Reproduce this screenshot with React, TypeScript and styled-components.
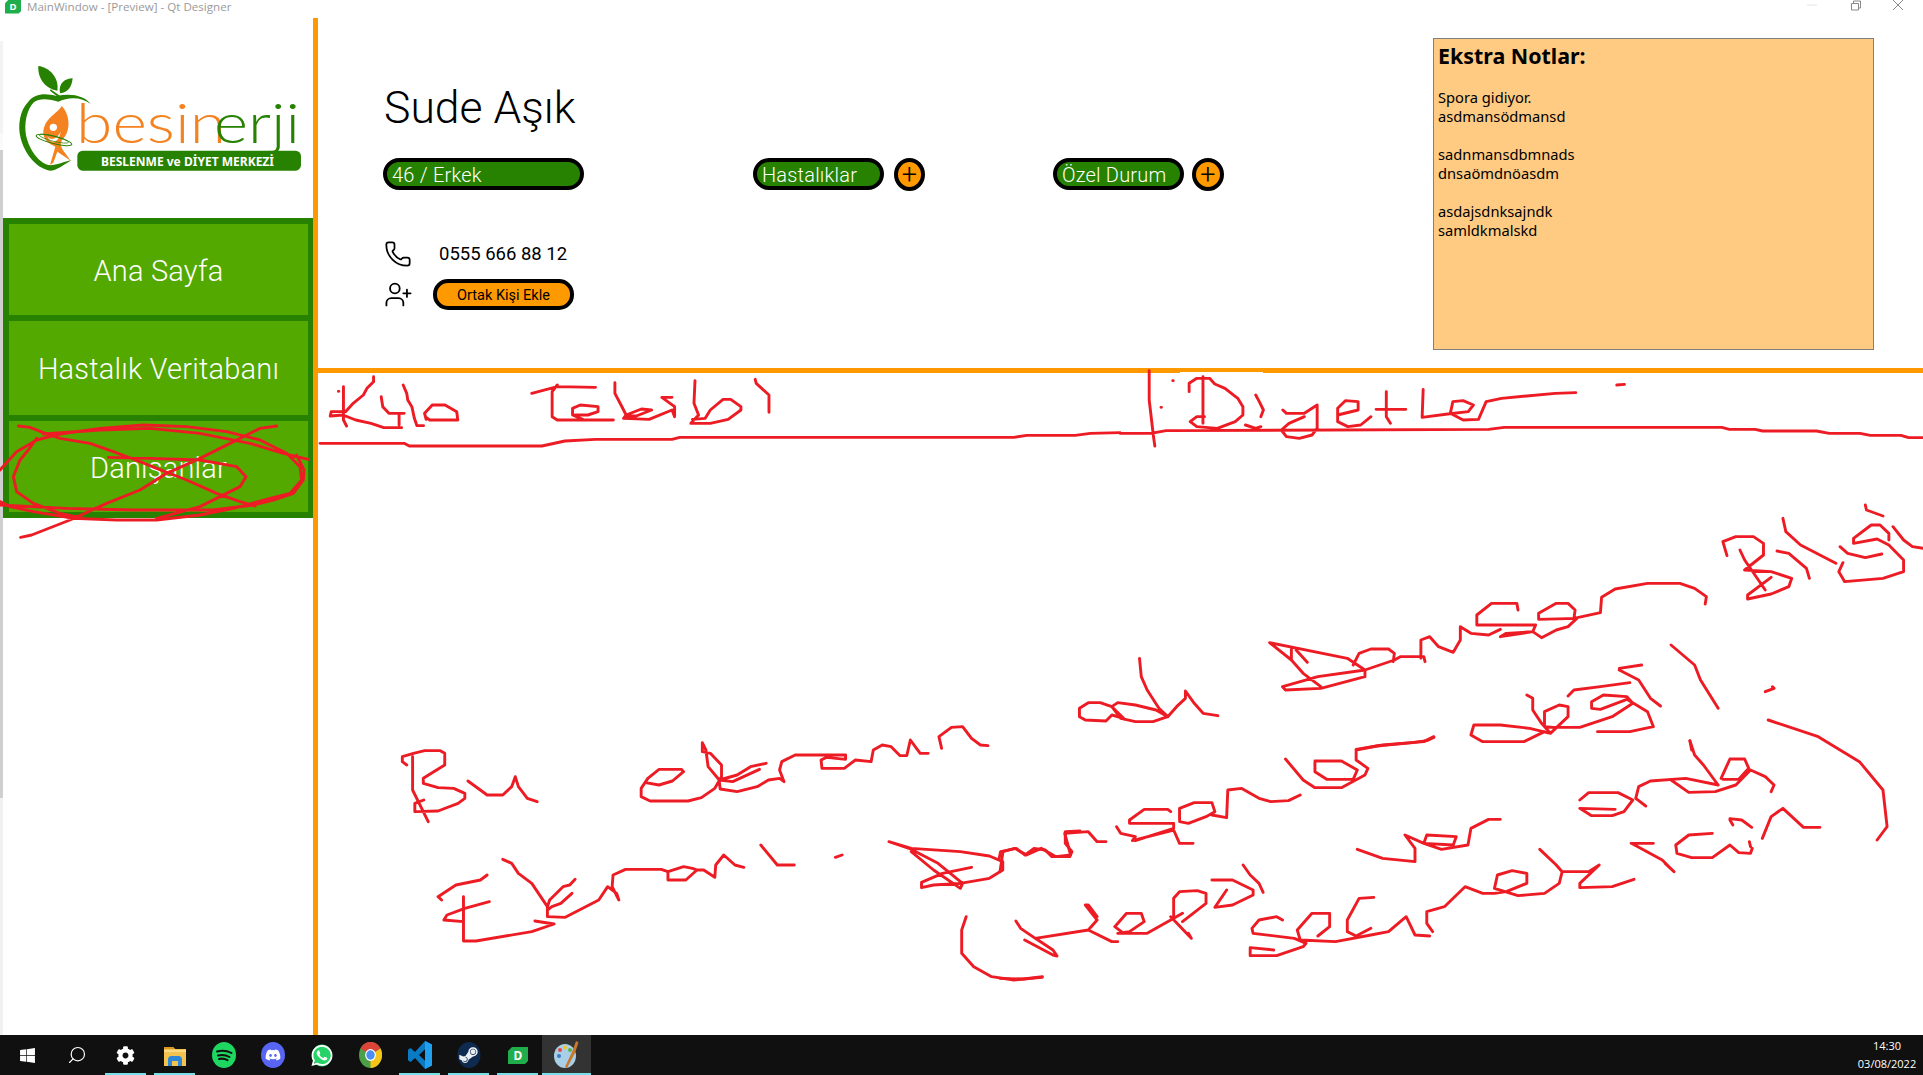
import React from 'react';
import styled, { createGlobalStyle } from 'styled-components';
import { Phone, UserPlus, Search } from 'lucide-react';
import { FaWindows, FaCog, FaDiscord, FaWhatsapp, FaSteamSymbol } from 'react-icons/fa';

const Global = createGlobalStyle`
  html, body { margin: 0; padding: 0; background: #fff; overflow: hidden; }
  * { box-sizing: border-box; }
`;

const Page = styled.div`
  position: relative;
  width: 1923px;
  height: 1075px;
  display: flex;
  flex-direction: column;
  overflow: hidden;
  background: #fff;
  font-family: 'Roboto', 'Noto Sans', sans-serif;
`;

const TitleBar = styled.header`
  height: 18px;
  flex: none;
  display: flex;
  align-items: flex-start;
  padding-left: 5px;
  gap: 6px;
`;
const TitleText = styled.span`
  font: 11.6px/14px 'Open Sans', sans-serif;
  color: #9a9a9a;
  white-space: nowrap;
`;
const WindowControls = styled.div`
  margin-left: auto;
  display: flex;
  gap: 29px;
  padding-right: 18px;
  color: #777;
`;
const ControlGlyph = styled.svg`
  width: 14px;
  height: 11px;
  display: block;
`;

const Main = styled.div`
  flex: 1;
  min-height: 0;
  display: flex;
`;

const Sidebar = styled.aside`
  width: 318px;
  flex: none;
  border-right: 5px solid #ff9900;
  padding-left: 3px;
  background:
    linear-gradient(to bottom, #fff 23px, #f3f3f6 23px, #f3f3f6 115px, #fafafa 115px, #fafafa 132px, #cfcfcf 132px, #cfcfcf 780px, #f1f1f1 780px)
    0 0 / 3px 100% no-repeat;
`;
const LogoBox = styled.div`
  height: 200px;
  margin-left: -3px;
`;
const Nav = styled.nav`
  width: 310px;
  height: 300px;
  display: grid;
  grid-template-rows: 91px 94px 91px;
  gap: 6px;
  padding: 6px 5px 6px 6px;
  background: #268200;
`;
const NavItem = styled.div`
  background: #53a900;
  color: #fff;
  display: flex;
  align-items: center;
  justify-content: center;
  padding-top: 2px;
  font-size: 29px;
  font-weight: 300;
  letter-spacing: 0.2px;
`;

const Content = styled.main`
  flex: 1;
  min-width: 0;
  display: flex;
  flex-direction: column;
`;
const Header = styled.section`
  height: 355px;
  flex: none;
  display: flex;
  border-bottom: 5px solid #ff9900;
`;
const Info = styled.div`
  flex: 1;
  padding: 60px 0 0 65px;
`;
const Name = styled.h1`
  margin: 0 0 20px 1px;
  font-size: 44.5px;
  line-height: 60px;
  font-weight: 300;
  color: #000;
`;
const PillRow = styled.div`
  display: flex;
  align-items: center;
  height: 32px;
`;
const Pill = styled.div<{ $w: number; $gapAfter: number }>`
  width: ${p => p.$w}px;
  height: 32px;
  margin-right: ${p => p.$gapAfter}px;
  padding: 1px 0 0 5px;
  border: 4px solid #000;
  border-radius: 16px;
  background: #268200;
  color: #fff;
  font-size: 20px;
  font-weight: 300;
  line-height: 24px;
  letter-spacing: 0.2px;
`;
const PlusButton = styled.div<{ $w: number; $gapAfter: number }>`
  width: ${p => p.$w}px;
  height: 33px;
  margin-right: ${p => p.$gapAfter}px;
  border: 4px solid #000;
  border-radius: 50%;
  background: #ff9900;
  display: flex;
  align-items: center;
  justify-content: center;
  color: #000;
  font-size: 27px;
  font-weight: 300;
  line-height: 1;
  padding-top: 3px;
`;
const ContactRow = styled.div<{ $top: number }>`
  display: flex;
  align-items: center;
  height: 31px;
  margin-top: ${p => p.$top}px;
  padding-left: 1px;
`;
const IconCell = styled.span`
  width: 49px;
  flex: none;
  display: flex;
`;
const PhoneText = styled.span`
  font-size: 18.5px;
  font-weight: 400;
  color: #000;
  padding: 1px 0 0 6px;
`;
const ShareButton = styled.div`
  width: 141px;
  height: 31px;
  border: 4px solid #000;
  border-radius: 15px;
  background: #ff9900;
  color: #000;
  font-size: 14.5px;
  display: flex;
  align-items: center;
  justify-content: center;
  padding-top: 1px;
  font-weight: 400;
`;
const Notes = styled.div`
  width: 441px;
  height: 312px;
  margin: 20px 49px 0 0;
  padding: 4px 4px;
  border: 1.5px solid #808080;
  background: #ffcb83;
  color: #000;
  font: 14.7px/19px 'Noto Sans', sans-serif;
`;
const NotesTitle = styled.div`
  font-size: 21.4px;
  font-weight: 700;
  line-height: 26px;
  margin-bottom: 19px;
`;
const NotesLine = styled.div`
  min-height: 19px;
  white-space: pre;
`;

const Canvas = styled.div`
  flex: 1;
  background: #fff;
`;

const Taskbar = styled.footer`
  height: 40px;
  flex: none;
  display: flex;
  padding-left: 3px;
  background: #101010;
  color: #fff;
`;
const Slot = styled.div<{ $active?: boolean; $running?: boolean }>`
  position: relative;
  width: 49px;
  height: 40px;
  display: flex;
  align-items: center;
  justify-content: center;
  background: ${p => (p.$active ? '#333' : 'transparent')};
  &::after {
    content: '';
    display: ${p => (p.$running ? 'block' : 'none')};
    position: absolute;
    bottom: 0;
    left: ${p => (p.$active ? 0 : 4)}px;
    right: ${p => (p.$active ? 0 : 4)}px;
    height: 2px;
    background: #76dfe8;
  }
`;
const Clock = styled.div`
  margin-left: auto;
  width: 72px;
  padding-top: 2px;
  font: 11px/18px 'Open Sans', sans-serif;
  text-align: center;
  color: #fff;
`;
const Flip = styled.span`
  display: flex;
  transform: scaleX(-1);
`;

const InkLayer = styled.svg`
  position: absolute;
  left: 0;
  top: 0;
  width: 1923px;
  height: 1075px;
  pointer-events: none;
`;
const Ink = styled.path`
  fill: none;
  stroke: #ed1c24;
  stroke-width: 2.9px;
  stroke-linejoin: round;
  stroke-linecap: round;
  vector-effect: non-scaling-stroke;
`;
const Patch = styled.rect`
  fill: #fff;
`;

const LogoStroke = styled.path`
  fill: #268200;
`;
const LogoWord = styled.text<{ $c: string }>`
  font-family: 'Lato', sans-serif;
  font-weight: 300;
  font-size: 56px;
  fill: ${p => p.$c};
`;
const LogoTag = styled.text`
  font-family: 'Noto Sans', sans-serif;
  font-weight: 700;
  font-size: 12px;
  fill: #fff;
`;

const Logo = () => (
  <svg width="313" height="200" viewBox="0 18 313 200">
    <LogoWord $c="#f58220" x="76" y="143" textLength="150" lengthAdjust="spacingAndGlyphs">besin</LogoWord>
    <LogoWord $c="#268200" x="214" y="143" textLength="86" lengthAdjust="spacingAndGlyphs">erji</LogoWord>
    <g transform="translate(0 50) scale(.3333)">
      <LogoStroke d="M115 48C150 52 178 85 172 122C140 118 112 88 115 48Z" />
      <LogoStroke d="M218 85C196 85 174 100 180 130C205 128 216 108 218 85Z" />
      <LogoStroke d="M152 118L184 140L178 144L150 122Z" />
      <LogoStroke d="M272 162C255 138 215 128 170 138C140 130 105 128 85 155C60 180 52 225 62 265C72 305 105 355 150 362C170 362 190 345 215 330C190 335 165 348 145 345C110 335 85 290 78 255C72 220 80 180 100 158C120 142 150 148 175 155C205 140 245 140 272 162Z" />
      <path d="M185 168C172 192 130 205 130 250C132 272 148 282 166 290L150 345L160 338L172 305L212 332C195 305 172 290 188 268C212 245 212 195 185 168Z" fill="#f58220" />
      <circle cx="160" cy="232" r="11" fill="#fff" />
      <path d="M142 258C150 272 170 270 182 245C176 282 150 285 142 258Z" fill="#fff" />
      <ellipse cx="162" cy="270" rx="55" ry="11" transform="rotate(14 162 270)" fill="none" stroke="#268200" strokeWidth="3" />
      <ellipse cx="162" cy="266" rx="45" ry="8" transform="rotate(14 162 266)" fill="none" stroke="#268200" strokeWidth="2" />
      <rect x="232" y="302" width="671" height="60" rx="16" fill="#268200" />
    </g>
    <LogoTag x="101" y="166" textLength="173" lengthAdjust="spacingAndGlyphs">BESLENME ve DİYET MERKEZİ</LogoTag>
  </svg>
);

const DesignerIcon = ({ size }: { size: number }) => (
  <svg width={size} height={size * 0.85} viewBox="0 0 20 17">
    <path d="M4 0H20V14L17 17H0V4Z" fill="#1fae4b" />
    <text x="10" y="13" textAnchor="middle" fontFamily="Noto Sans" fontSize="12" fontWeight="700" fill="#fff">D</text>
  </svg>
);

const FolderIcon = () => (
  <svg width="22" height="21" viewBox="0 0 22 21">
    <path d="M0 2H9L11 4H22V21H0Z" fill="#f4c24f" />
    <path d="M0 2H9L11 4H0Z" fill="#d9971f" />
    <path d="M0 5H22V7H0Z" fill="#fbdc82" />
    <path d="M4 21V14C4 12 6 11 7 11H15C16 11 18 12 18 14V21H14V16H8V21Z" fill="#2f88d6" />
  </svg>
);
const SpotifyIcon = () => (
  <svg width="24" height="26" viewBox="0 0 24 26">
    <ellipse cx="12" cy="13" rx="12" ry="13" fill="#1ed760" />
    <path d="M5 9.5C10 8 15 8.5 19.5 11M6 13.5C10 12.5 14 13 17.5 15M7 17C10 16.2 13 16.8 15.5 18.2" fill="none" stroke="#111" strokeWidth="2" strokeLinecap="round" />
  </svg>
);
const DiscordIcon = () => (
  <svg width="24" height="26" viewBox="0 0 24 26">
    <ellipse cx="12" cy="13" rx="12" ry="13" fill="#5865f2" />
    <FaDiscord x="4" y="5" size="16" color="#fff" />
  </svg>
);
const WhatsappIcon = () => (
  <svg width="24" height="27" viewBox="0 0 24 27">
    <ellipse cx="12" cy="13.5" rx="10" ry="11" fill="#25d366" />
    <FaWhatsapp x="0" y="1.5" size="24" color="#fff" />
  </svg>
);
const ChromeIcon = () => (
  <svg width="23" height="26" viewBox="0 0 24 24" preserveAspectRatio="none">
    <circle cx="12" cy="12" r="12" fill="#4c9f46" />
    <path d="M12 12L1.6 6A12 12 0 0 1 22.4 6Z" fill="#dc4437" />
    <path d="M12 12L22.4 6A12 12 0 0 1 12 24Z" fill="#f5c518" />
    <circle cx="12" cy="12" r="5.6" fill="#fff" />
    <circle cx="12" cy="12" r="4.4" fill="#4a8ef5" />
  </svg>
);
const VscodeIcon = () => (
  <svg width="24" height="28" viewBox="0 0 24 24" preserveAspectRatio="none">
    <path d="M17 0L24 3V21L17 24L7 14.5L2.5 18L0 16.5V7.5L2.5 6L7 9.5ZM17 7L11 12L17 17Z" fill="#0a7ac4" />
    <path d="M17 0L24 3V21L17 24Z" fill="#21a0ef" />
  </svg>
);
const SteamIcon = () => (
  <svg width="24" height="26" viewBox="0 0 24 26">
    <ellipse cx="12" cy="13" rx="11.5" ry="13" fill="#0e2a4e" />
    <FaSteamSymbol x="1" y="2.5" size="21" color="#e8eef4" />
  </svg>
);
const PaintIcon = () => (
  <svg width="26" height="30" viewBox="0 0 26 30">
    <ellipse cx="11" cy="16" rx="11" ry="12" fill="#a9cfe6" />
    <circle cx="6" cy="10" r="2" fill="#e04848" />
    <circle cx="11" cy="7.5" r="2" fill="#f2c230" />
    <circle cx="16" cy="10" r="2" fill="#58b248" />
    <circle cx="5" cy="16" r="2" fill="#3a78c8" />
    <path d="M22 1L24.5 2.5L21 13L13 28L11 27L18 12Z" fill="#c9772a" />
  </svg>
);

const taskItems: { key: string; icon: React.ReactNode; running?: boolean; active?: boolean }[] = [
  { key: 'start', icon: <FaWindows size={17} /> },
  { key: 'search', icon: <Flip><Search size={20} strokeWidth={1.4} /></Flip> },
  { key: 'settings', icon: <FaCog size={19} />, running: true },
  { key: 'files', icon: <FolderIcon />, running: true },
  { key: 'spotify', icon: <SpotifyIcon /> },
  { key: 'discord', icon: <DiscordIcon /> },
  { key: 'whatsapp', icon: <WhatsappIcon /> },
  { key: 'chrome', icon: <ChromeIcon /> },
  { key: 'vscode', icon: <VscodeIcon />, running: true },
  { key: 'steam', icon: <SteamIcon />, running: true },
  { key: 'designer', icon: <DesignerIcon size={20} />, running: true },
  { key: 'paint', icon: <PaintIcon />, running: true, active: true },
];

const notes = ['Spora gidiyor.', 'asdmansödmansd', '', 'sadnmansdbmnads', 'dnsaömdnöasdm', '', 'asdajsdnksajndk', 'samldkmalskd'];

const strokes: { x: number; y: number; sx: number; d: string }[] = [
  { x: 0, y: 210, sx: 3, d: `
    M55,648 L90,652 L130,668 L180,685 L270,700 L340,725 L420,755 L470,775 L560,810 L650,850 L720,875 L765,888
    M0,780 L50,725 L110,690 L180,672 L300,655 L430,645 L560,650 L680,665 L780,690 L860,730 L900,770 L905,810 L870,850 L810,865 L700,895 L600,915 L470,930 L350,930 L220,925 L100,905 L30,890 L0,875
    M110,685 L85,720 L60,750 L40,800 L50,845 L100,880 L180,910 L250,925
    M130,672 L300,660 L450,655 L600,670 L750,700 L850,730 L925,748
    M890,735 L912,780 L910,810 L880,850 L820,870 L760,885 L640,900 L400,900 L200,895 L0,885
    M62,982 L95,975 L210,930 L320,880 L420,840 L500,790 L600,745 L690,700 L780,655 L830,648
    M325,742 L450,745 L600,750 L710,770 L738,800 L720,830 L660,860 L600,890 L470,925` },
  { x: 320, y: 360, sx: 1.96, d: `
    M46,80 L46,180 L52,198 M105,50 L105,65 L92,85 L85,105 L65,130 L50,155 L22,155 L20,168 L45,165 L70,180 L100,190 L125,203 L160,203 M36,94 L37,94
    M120,110 L123,140 L135,160 L165,160 M155,160 L155,195 M163,75 L170,100 L172,120 L180,140 L185,175 L190,197 L203,197
    M208,178 L205,160 L220,135 L245,135 L268,155 L270,180 L215,180 L208,172
    M415,100 L465,80 L540,82 M465,75 L455,95 L455,170 L465,180 L575,180 M515,178 L495,165 L495,145 L510,135 L545,140 L545,155 L525,165 L500,165
    M578,68 L578,100 L590,135 L600,165 L595,175 L645,178 L690,150 L695,170 L695,140 L670,112 L690,112 M600,165 L630,147 L650,150 L620,168 L600,168
    M735,62 L733,130 L742,165 L727,190 L765,190 L800,178 L825,150 L825,140 L805,118 L790,118 L765,150 L755,175 L730,178
    M853,58 L855,70 L880,105 L880,157
    M0,250 L165,250 L175,258 L435,258 L480,243 L540,238 L690,238 L705,232 L1360,232 L1385,226 L1480,226 L1510,220 L1568,218` },
  { x: 1120, y: 360, sx: 1.9527, d: `
    M0,220 L60,220 L90,212 L720,208 L750,202 L1175,202 L1190,208 L1240,208 L1255,213 L1360,213 L1385,220 L1445,220 L1465,226 L1525,226 L1540,233 L1568,233
    M57,32 L57,120 L65,225 L68,258
    M162,50 L162,190 M135,95 L135,70 L150,55 L175,55 L185,72 L205,85 L230,115 L240,140 L240,165 L225,185 L190,205 L150,200 L137,185 L150,170 L165,170
    M265,105 L272,125 L280,150 L275,170 M245,195 L265,205 L275,200
    M318,150 L325,160 L360,160 L385,135 L385,205 L375,225 L350,235 L325,230 L315,210 L330,190 L360,170
    M425,165 L465,150 L465,125 L440,122 L425,145 L425,185 L445,200 L470,195 L490,170
    M520,95 L520,170 L528,190 M500,148 L558,148
    M592,88 L590,172 L640,162 L680,155 L690,135 L670,122 L650,125 L645,160 L670,180 L700,178 L715,125 L745,115 L850,100 L890,98
    M970,75 L985,73 M103,62 L104,62 M80,142 L81,142` },
  { x: 1000, y: 490, sx: 1.6988, d: `
    M135,655 L150,638 L170,638 L190,650 L200,638 L230,645 L265,660 L285,680 L260,695 L230,695 L205,685 L190,650 L210,685 L190,675 L180,693 L145,690 L135,680 L135,655
    M237,505 L240,560 L250,600 L270,655 L285,680 L300,650 L315,625 L315,603 L330,640 L345,670 L370,677
    M458,458 L590,505 L620,540 L620,560 L545,595 L485,600 L480,590 L540,560 L620,540 L670,510 L680,500 L720,500 L722,515 M458,458 L495,510 L515,550 L545,590 M495,472 L495,510 M503,480 L522,517 M600,525 L610,490 L630,477 L660,477 L670,490 L668,515
    M715,505 L715,450 L730,440 L745,470 L770,487 L782,450 L782,410 L800,430 L830,435 L850,418
    M880,360 L878,340 L835,340 L810,375 L810,405 L910,405 L905,425 L850,440 L860,430 L905,425 L920,443 L945,420 L965,410 L980,385 L915,388 L915,370 L945,340 L965,340 L977,360 L975,385 L1020,368 L1022,322 L1045,297 L1100,280 L1155,280 L1180,295 L1200,320 L1198,342
    M1235,197 L1228,155 L1250,140 L1280,140 L1297,160 L1297,195 L1265,240 L1310,245 L1345,265 L1340,290 L1310,312 L1270,327 L1270,315 L1310,262 M1257,180 L1265,210 L1300,300
    M1320,183 L1340,190 L1370,235 L1375,265
    M1330,85 L1335,125 L1360,165 L1420,220
    M1500,78 L1472,60 L1470,45 M1450,160 L1450,145 L1480,105 L1495,105 L1510,130 L1510,150 M1450,160 L1490,147 L1510,165 L1535,210 L1535,245 L1500,265 L1435,275 L1425,245 L1432,218 M1427,170 L1440,190 L1470,203 L1498,192 M1517,110 L1535,150 L1550,170 L1568,175
    M605,778 L650,765 L720,755 L737,740
    M895,615 L905,625 L905,660 L920,700 L935,730 L965,680 L965,650 L950,645 L925,665 L925,710 L940,712 L985,712 L1040,680 L1075,640 L1065,620 L1025,615 L1005,635 L1005,655 L1020,658 L1065,628 L1100,665 L1110,710 L1070,725 L1015,725
    M935,730 L900,715 L850,705 L805,705 L800,735 L820,755 L890,755 L925,725
    M965,618 L975,600 L1020,590 L1070,578 M1052,535 L1090,525 M1052,540 L1085,570 L1105,625 L1122,648
    M1140,465 L1180,525 L1190,570 L1220,655 M1300,605 L1315,595 L1312,590 M1172,753 L1175,780` },
  { x: 1000, y: 720, sx: 1.6988, d: `
    M1305,0 L1390,50 L1460,125 L1500,210 L1507,320 L1490,360
    M0,455 L5,395 L25,385 L45,405 L70,385 L95,410 L120,405 L110,340 L150,335 L165,365 L180,365
    M198,320 L205,340 L230,350 L225,362 L295,330 L305,370 L328,370 M290,275 L285,268 L245,268 L220,300 L220,310 L295,310 L295,325 L230,362
    M305,300 L305,265 L330,248 L360,248 L365,275 L350,290 L320,310 L305,305 M360,285 L385,293 L387,210 L410,205 L440,235 L460,245 L490,242 L510,225
    M485,117 L515,180 L535,203 L580,203 L620,165 L625,145 L605,120 L605,90 L640,78 L700,68 L725,62 L737,52
    M535,125 L535,155 L555,178 L600,178 L607,150 L580,123 L535,123
    M607,388 L650,415 L705,425 L705,385 L688,345 L720,370 L750,388 L795,375 L800,325 L830,298 L850,298 M720,370 L770,375 L775,350 L725,345 L720,370
    M985,240 L1000,218 L1050,218 L1075,240 L1060,275 L1040,287 L1005,287 L985,265 L1045,268
    M1097,258 L1080,235 L1085,200 L1105,183 L1165,175 L1220,195 M1140,180 L1170,217 L1215,215 L1250,195 L1275,150 L1300,170 L1315,195 L1310,215
    M1172,62 L1180,105 L1195,135 L1220,195 M1225,175 L1240,117 L1265,117 L1272,145 L1255,178 L1228,178
    M1240,300 L1245,315 M1240,296 L1260,300 L1277,322 M1273,365 L1275,380
    M1295,355 L1310,290 L1330,265 L1365,322 L1393,322
    M1210,340 L1170,345 L1148,375 L1150,400 L1175,413 L1210,413 L1240,375 L1255,398 L1275,400 L1278,385
    M1072,370 L1110,370 M1075,372 L1125,420 L1145,455 L1130,430
    M917,388 L945,435 L955,455 L950,490 L925,520 L880,527 L840,505 L845,465 L870,452 L895,460 L895,490 L860,515 L840,520 L820,520 L790,500 L755,560 L725,575 L725,610 L735,635
    M955,455 L1000,455 L1018,435 L985,490 L985,503 L1040,500 L1077,478
    M480,600 L470,590 L440,600 L428,625 L430,640 L500,655 L520,670 L515,680 L470,707 L425,707 L425,683 L465,690
    M510,660 L505,630 L530,580 L560,580 L560,620 L540,648 M510,660 L570,665 L630,645 L660,635 L690,590 L705,645 L730,648
    M635,532 L610,535 L590,600 L590,635 L605,648 L630,625
    M27,603 L35,625 L60,655 L150,630 L190,665 L200,665 M42,660 L90,705 L97,708 L90,690 L60,655 M150,630 L165,600 L145,555 L150,555 L165,590
    M210,640 L195,620 L215,580 L240,580 L245,605 L220,635 L200,640 L250,640 L290,600 L310,580
    M290,590 L325,655 L320,640 M310,605 L350,550 L350,520 L335,512 L305,515 L295,535 L295,600
    M360,480 L395,480 L430,510 L430,525 L395,555 L365,562 L385,510
    M413,435 L425,465 L440,490 L447,517
    M0,775 L40,777 L72,770` },
  { x: 380, y: 720, sx: 2.24, d: `
    M60,135 L50,125 L50,110 L75,100 L100,92 L135,92 L145,100 L145,135 L115,160 L97,175 L97,190 L130,203 L165,205 L190,220 L190,235 L175,250 L130,273 L78,275 L78,250 L98,240 M73,110 L73,210 L108,305
    M197,183 L240,225 L275,225 L295,200 L303,170 L310,200 L330,235 L352,245
    M595,188 L625,195 L655,183 L680,155 L675,148 L625,148 L600,175 L585,205 L585,230 L605,243 L690,243 L720,233 L750,205 L765,170 L765,135 L740,100 L722,95 L722,68 L730,90 L735,140 L760,180 L790,185 L850,148 M760,180 L800,165 L830,140 L865,130
    M760,185 L762,207 L800,215 L845,200 L870,180 L895,175 L905,185 L895,150 L900,125 L930,105 L1043,105 L1043,118 L1000,112 L988,120 L990,145 L1040,145 L1065,120 L1100,125 L1105,90 L1125,75 L1145,80 L1165,107 L1180,107 L1188,60 L1210,100 L1228,100
    M1258,85 L1252,50 L1280,22 L1305,20 L1325,55 L1345,75 L1362,77
    M275,418 L295,430 L310,460 L340,490 L375,560 L380,540 L410,500 L425,495 L437,478 M375,560 L375,590 L415,592 L490,540 L510,500 L530,520 L535,540 L520,500 L522,465 L550,448 L630,448 L645,455 L645,480 L685,480 L710,450 L725,450 L750,472 L752,435 L770,405 L795,435 L815,442 M645,455 L680,440 L700,445 L710,450
    M240,465 L225,480 L170,495 L130,530 L138,540 M187,530 L187,663 L215,663 L340,635 L390,612 L347,603 M245,545 L190,565 L150,585 L143,600 L187,605
    M430,520 L405,550 L385,560 L375,570
    M853,375 L890,435 L928,435 M1020,412 L1035,405
    M1140,365 L1190,385 L1300,395 L1365,408 L1395,425 L1395,450 L1365,475 L1300,490 L1240,495 L1213,503 L1213,487 L1260,460 L1325,442 M1140,365 L1185,385 L1250,430 L1305,490 L1300,505 L1240,450 L1190,395
    M1387,415 L1390,395 L1425,385 L1445,405 L1465,385 L1490,390 L1505,410 L1545,410 L1550,395 L1535,370 L1535,335 L1568,333
    M1313,590 L1303,630 L1303,700 L1330,740 L1370,770 L1420,780 L1483,772` },
];

export default function App() {
  return (
    <Page>
      <Global />
      <TitleBar>
        <DesignerIcon size={16} />
        <TitleText>MainWindow - [Preview] - Qt Designer</TitleText>
        <WindowControls>
          <ControlGlyph viewBox="0 0 14 11"><path d="M2 5H12" stroke="#e6e6e6" fill="none" /></ControlGlyph>
          <ControlGlyph viewBox="0 0 14 11"><path d="M3.5 3.5H10.5V10H3.5ZM5.5 3.5V1H12.5V8H10.5" stroke="#888" fill="none" /></ControlGlyph>
          <ControlGlyph viewBox="0 0 14 11"><path d="M2 0L12 10M12 0L2 10" stroke="#888" fill="none" /></ControlGlyph>
        </WindowControls>
      </TitleBar>
      <Main>
        <Sidebar>
          <LogoBox><Logo /></LogoBox>
          <Nav>
            <NavItem>Ana Sayfa</NavItem>
            <NavItem>Hastalık Veritabanı</NavItem>
            <NavItem>Danışanlar</NavItem>
          </Nav>
        </Sidebar>
        <Content>
          <Header>
            <Info>
              <Name>Sude Aşık</Name>
              <PillRow>
                <Pill $w={201} $gapAfter={169}>46 / Erkek</Pill>
                <Pill $w={131} $gapAfter={10}>Hastalıklar</Pill>
                <PlusButton $w={31} $gapAfter={128}>+</PlusButton>
                <Pill $w={131} $gapAfter={8}>Özel Durum</Pill>
                <PlusButton $w={32} $gapAfter={0}>+</PlusButton>
              </PillRow>
              <ContactRow $top={48}>
                <IconCell><Phone size={28} strokeWidth={1.5} color="#000" /></IconCell>
                <PhoneText>0555 666 88 12</PhoneText>
              </ContactRow>
              <ContactRow $top={10}>
                <IconCell><UserPlus size={29} strokeWidth={1.5} color="#000" /></IconCell>
                <ShareButton>Ortak Kişi Ekle</ShareButton>
              </ContactRow>
            </Info>
            <Notes>
              <NotesTitle>Ekstra Notlar:</NotesTitle>
              {notes.map((line, i) => <NotesLine key={i}>{line}</NotesLine>)}
            </Notes>
          </Header>
          <Canvas />
        </Content>
      </Main>
      <Taskbar>
        {taskItems.map(t => (
          <Slot key={t.key} $active={t.active} $running={t.running}>{t.icon}</Slot>
        ))}
        <Clock>14:30<br />03/08/2022</Clock>
      </Taskbar>
      <InkLayer viewBox="0 0 1923 1075">
        <Patch x="1180" y="372" width="83" height="1.5" />
        {strokes.map((s, i) => (
          <g key={i} transform={`translate(${s.x} ${s.y}) scale(${1 / s.sx} ${1 / 3})`}>
            <Ink d={s.d} />
          </g>
        ))}
      </InkLayer>
    </Page>
  );
}
